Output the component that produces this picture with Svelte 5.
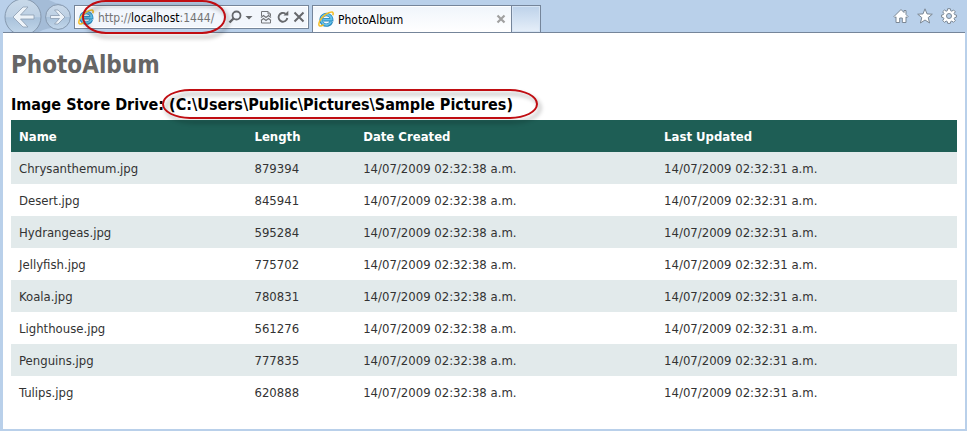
<script>
  const files = [
    { name: 'Chrysanthemum.jpg', length: 879394 },
    { name: 'Desert.jpg', length: 845941 },
    { name: 'Hydrangeas.jpg', length: 595284 },
    { name: 'Jellyfish.jpg', length: 775702 },
    { name: 'Koala.jpg', length: 780831 },
    { name: 'Lighthouse.jpg', length: 561276 },
    { name: 'Penguins.jpg', length: 777835 },
    { name: 'Tulips.jpg', length: 620888 }
  ];
  const created = '14/07/2009 02:32:38 a.m.';
  const updated = '14/07/2009 02:32:31 a.m.';
</script>

{#snippet logo()}
  <svg class="logo" viewBox="0 0 16 16" aria-hidden="true">
    <path d="M13.4 10.6A5.3 5.3 0 1 1 13.7 8.7H5.2" fill="none" stroke="#2586bd" stroke-width="3.4" />
    <path d="M13.2 10.7A5.2 5.2 0 1 1 13.6 8.6H5.2" fill="none" stroke="#62c0ea" stroke-width="1.9" />
    <path d="M14.8 4.2C15.6 2.4 15.2.9 13.5 1 10.3 1 5 4.8 2.3 9.2.6 12 .3 14.7 1.800 15c1.1.3 2.500-.4 3.800-1.400" fill="none" stroke="#f4bd26" stroke-width="1.5" />
  </svg>
{/snippet}

<div class="window">
  <header>
    <nav class="history" aria-label="History">
      <svg class="bridge" viewBox="0 0 72 32" aria-hidden="true">
        <path d="M20 0H46Q51 3 58 4V28Q45 27 36 32H20Z" fill="#a4bcd7" />
      </svg>
      <button class="round back" aria-label="Back">
        <svg viewBox="0 0 38 38">
          <defs>
            <linearGradient id="disc" x1="0" y1="0" x2="0" y2="1">
              <stop offset="0" stop-color="#c9d9e9" />
              <stop offset=".5" stop-color="#bdd0e4" />
              <stop offset=".52" stop-color="#a9c2db" />
              <stop offset="1" stop-color="#c4d8eb" />
            </linearGradient>
          </defs>
          <circle cx="19" cy="19" r="18" fill="url(#disc)" stroke="#8598ae" />
          <path d="M19 9h5l-7.500 8H30v4H16.500l7.500 8h-5L9 19Z" fill="#edf3f9" stroke="#8c9cb0" stroke-width=".8" />
        </svg>
      </button>
      <button class="round forward" aria-label="Forward">
        <svg viewBox="0 0 26 26">
          <circle cx="13" cy="13" r="12.400" fill="url(#disc)" stroke="#8598ae" />
          <path d="M13 6h-3.500l5 5.500H5.500v3h9l-5 5.500H13l7-7Z" fill="#edf3f9" stroke="#8c9cb0" stroke-width=".8" />
        </svg>
      </button>
    </nav>

    <div class="address">
      {@render logo()}
      <div class="url">
        <span class="dim">http://</span>localhost<span class="dim">:1444/</span>
        <span class="ring ring-url"></span>
      </div>
      <button class="icon search" aria-label="Search">
        <svg viewBox="0 0 14 14"><circle cx="8.500" cy="5.500" r="4" fill="none" stroke="#66686c" stroke-width="1.800" /><path d="m5.500 8.500-4 4" stroke="#66686c" stroke-width="2.400" /></svg>
      </button>
      <button class="icon more" aria-label="Search options">
        <svg viewBox="0 0 14 14"><path d="M3.500 6h7L7 9.500Z" fill="#66686c" /></svg>
      </button>
      <button class="icon compat" aria-label="Compatibility view">
        <svg viewBox="0 0 14 14"><path d="M2.500 6V1.500H9l2.500 2.500v2M2.500 10v3h9v-3M9 1.500V4h2.500" fill="none" stroke="#74767a" /><path d="m2 7.500 2.500-2L7 7.500l2.500-2 2.500 2M2 10.500l2.500-2 2.500 2 2.500-2 2.500 2" fill="none" stroke="#74767a" stroke-width="1.200" /></svg>
      </button>
      <button class="icon" aria-label="Refresh">
        <svg viewBox="0 0 14 14"><path d="M9.500 3.700A4.400 4.400 0 1 0 11.300 8" fill="none" stroke="#66686c" stroke-width="1.900" /><path d="M7.500 5.600h4.800V.8Z" fill="#66686c" /></svg>
      </button>
      <button class="icon stop" aria-label="Stop">
        <svg viewBox="0 0 14 14"><path d="m2.500 2.500 9 9m0-9-9 9" stroke="#66686c" stroke-width="2" /></svg>
      </button>
    </div>

    <div class="tab">
      {@render logo()}
      <span class="tab-title">PhotoAlbum</span>
      <button class="icon" aria-label="Close tab">
        <svg viewBox="0 0 14 14"><path d="m3.500 3.500 7 7m0-7-7 7" stroke="#a0a0a0" stroke-width="2.200" /></svg>
      </button>
    </div>
    <button class="new-tab" aria-label="New tab"></button>

    <div class="tools">
      <button class="tool" aria-label="Home">
        <svg viewBox="0 0 16 16"><path d="M8 1.500 1 8.500l1 1.200 1-.9v5.700h3.700V10h2.600v4.500H13V8.800l1 .9 1-1.200-2-2V2.500h-2v2Z" fill="#fff" stroke="#7b8794" /></svg>
      </button>
      <button class="tool" aria-label="Favorites">
        <svg viewBox="0 0 16 16"><path d="m8 .8 2 5.100 5.300.3-4.100 3.400 1.400 5.400L8 12l-4.600 3 1.400-5.400L.7 6.200 6 5.900Z" fill="#fff" stroke="#7b8794" /></svg>
      </button>
      <button class="tool" aria-label="Tools">
        <svg viewBox="0 0 16 16">
          <path d="M6.700.7h2.600l.4 2 1.100.5 1.700-1.200 1.800 1.800-1.200 1.700.5 1.100 1.800.4v2.200l-1.800.5-.5 1.100 1.200 1.700-1.800 1.800-1.700-1.200-1.100.5-.4 1.800H6.700l-.4-1.800-1.100-.5-1.700 1.200-1.800-1.800 1.200-1.700-.5-1.100-1.800-.5V7l1.800-.4.5-1.100-1.200-1.700L3.500 2l1.700 1.200 1.100-.5Z" fill="#fff" stroke="#7b8794" />
          <circle cx="8" cy="8" r="2.500" fill="#b9d0ea" stroke="#7b8794" />
        </svg>
      </button>
    </div>
  </header>

  <main>
    <h1>PhotoAlbum</h1>
    <h2>Image Store Drive: <span class="path">(C:\Users\Public\Pictures\Sample Pictures)<span class="ring ring-path"></span></span></h2>
    <table>
      <thead>
        <tr>
          <th class="name">Name</th>
          <th class="length">Length</th>
          <th class="date">Date Created</th>
          <th class="date">Last Updated</th>
        </tr>
      </thead>
      <tbody>
        {#each files as file}
          <tr>
            <td>{file.name}</td>
            <td>{file.length}</td>
            <td>{created}</td>
            <td>{updated}</td>
          </tr>
        {/each}
      </tbody>
    </table>
  </main>
</div>

<style>
  :global(body) {
    margin: 0;
    background: #b9d0ea;
  }
  .window {
    display: flex;
    flex-direction: column;
    box-sizing: border-box;
    min-height: 100vh;
    padding: 0 2px 2px 3px;
    background: #b9d0ea;
    font-family: "DejaVu Sans Condensed", "DejaVu Sans", sans-serif;
  }
  button {
    padding: 0;
    border: 0;
    background: none;
  }
  svg {
    display: block;
  }
  header {
    display: flex;
    align-items: flex-end;
    height: 32px;
    border-bottom: 1px solid #75859a;
  }
  .history {
    position: relative;
    display: flex;
    align-items: center;
    align-self: stretch;
    gap: 3px;
    box-sizing: border-box;
    width: 71px;
    padding: 2px 0 0 1px;
    overflow: hidden;
  }
  .bridge {
    position: absolute;
    inset: 0;
    width: 72px;
    height: 32px;
  }
  .round {
    position: relative;
    flex: none;
  }
  .back {
    width: 38px;
    height: 38px;
  }
  .forward {
    width: 26px;
    height: 26px;
  }
  .address {
    display: flex;
    align-items: center;
    box-sizing: border-box;
    width: 235px;
    height: 24px;
    margin-bottom: 3px;
    padding: 0 2px 0 3px;
    border: 1px solid #75859a;
    background: #f2f6fc;
    box-shadow: inset 0 0 0 1px #fff;
  }
  .logo {
    flex: none;
    width: 16px;
    height: 16px;
  }
  .url {
    position: relative;
    flex: 1;
    padding: 2px 0 0 4px;
    font-size: 12px;
    line-height: 16px;
    white-space: nowrap;
    color: #000;
  }
  .dim {
    color: #737373;
  }
  .icon {
    flex: none;
    width: 14px;
    height: 14px;
  }
  .more,
  .compat {
    margin-right: 3px;
  }
  .stop {
    margin-left: 2px;
  }
  .tab {
    display: flex;
    align-items: center;
    box-sizing: border-box;
    width: 200px;
    height: 27px;
    margin-left: 3px;
    padding: 0 3px 0 5px;
    border: 1px solid #75859a;
    border-bottom: 0;
    background: linear-gradient(#f0f5fb, #fff);
    box-shadow: inset 0 1px #fff;
  }
  .tab-title {
    flex: 1;
    padding: 2px 0 0 4px;
    font-size: 12px;
    line-height: 16px;
  }
  .new-tab {
    width: 29px;
    height: 27px;
    border: 1px solid #75859a;
    border-width: 1px 1px 0 0;
    background: linear-gradient(#bdd2ea, #e6eff9);
    box-shadow: inset 0 0 0 1px #d6e4f4;
  }
  .tools {
    display: flex;
    gap: 8px;
    margin-left: auto;
    padding: 0 8px 8px 0;
  }
  .tool,
  .tool svg {
    width: 16px;
    height: 16px;
  }
  main {
    flex: 1;
    padding: 17px 8px 16px;
    background: #fff;
  }
  h1 {
    margin: 0;
    font-size: 24px;
    line-height: 30px;
    color: #666;
  }
  h2 {
    margin: 14px 0 4px;
    font-size: 16px;
    line-height: 22px;
    color: #000;
  }
  .path {
    position: relative;
    white-space: nowrap;
  }
  .ring {
    position: absolute;
    box-sizing: border-box;
    border: 2px solid #c00d12;
    pointer-events: none;
    filter: drop-shadow(3px 4px 2px rgb(0 0 0 / 35%));
  }
  .ring-url {
    inset: -8px 2px -8px -12px;
    border-radius: 24px / 50%;
  }
  .ring-path {
    inset: -6px -25px -5px -7px;
    border-radius: 28px / 50%;
  }
  table {
    width: 100%;
    border-collapse: collapse;
    table-layout: fixed;
    font-size: 13px;
    line-height: 16px;
    color: #333;
  }
  th,
  td {
    padding: 9px 8px 7px;
    text-align: left;
  }
  th {
    background: #1e5e55;
    color: #fff;
  }
  .name {
    width: 23.2%;
  }
  .length {
    width: 9.8%;
  }
  tbody tr:nth-child(odd) {
    background: #e2eaeb;
  }
</style>
